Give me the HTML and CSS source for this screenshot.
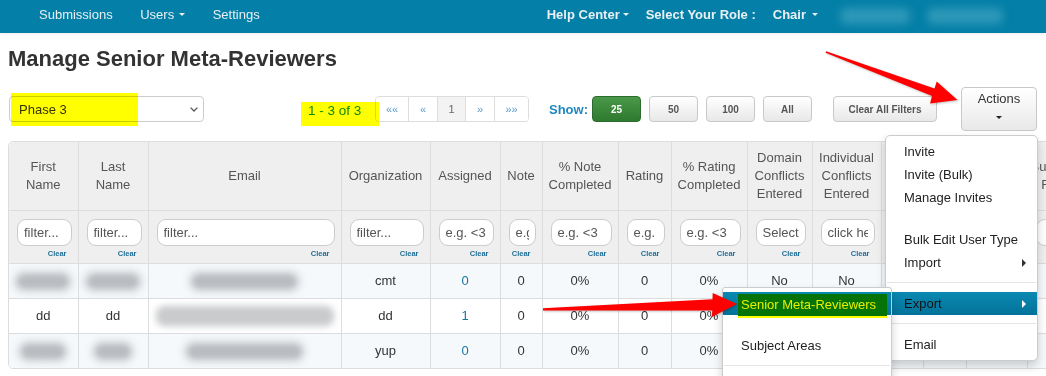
FILE: index.html
```html
<!DOCTYPE html>
<html lang="en">
<head>
    <meta charset="UTF-8">
    <meta name="viewport" content="width=device-width, initial-scale=1.0">
    <title>Manage Senior Meta-Reviewers</title>
    <link rel="stylesheet" href="styles.css">
</head>
<body>
    <div class="topbar">
        <div class="nav-left">
            <a>Submissions</a>
            <a>Users<span class="caret"></span></a>
            <a>Settings</a>
        </div>
        <div class="nav-right">
            <a class="strong">Help Center<span class="caret tight"></span></a>
            <span class="strong role">Select Your Role :</span>
            <a class="strong role">Chair<span class="caret wide"></span></a>
            <span class="nav-blur"></span>
            <span class="nav-blur second"></span>
        </div>
    </div>

    <div class="page">
        <h1 class="title">Manage Senior Meta-Reviewers</h1>

        <div class="toolbar">
            <div class="phase">
                <div class="select">
                    <span>Phase 3</span>
                    <svg width="8" height="5" viewBox="0 0 8 5"><path d="M0.6 0.6 L4 4 L7.4 0.6" fill="none" stroke="#555" stroke-width="1.3"/></svg>
                </div>
                <span class="marker phase-mark"></span>
            </div>

            <div class="count">
                1 - 3 of 3
                <span class="marker count-mark"></span>
            </div>

            <div class="pager">
                <span>&laquo;&laquo;</span>
                <span>&laquo;</span>
                <span class="on">1</span>
                <span>&raquo;</span>
                <span>&raquo;&raquo;</span>
            </div>

            <span class="show">Show:</span>
            <button class="btn green">25</button>
            <button class="btn">50</button>
            <button class="btn">100</button>
            <button class="btn">All</button>

            <button class="btn clear-all">Clear All Filters</button>

            <div class="actions">
                <button class="actions-btn">Actions<span class="caret dark"></span></button>
                <ul class="menu">
                    <li>Invite</li>
                    <li>Invite (Bulk)</li>
                    <li>Manage Invites</li>
                    <li class="gap"></li>
                    <li>Bulk Edit User Type</li>
                    <li class="sub">Import<span class="arrow"></span></li>
                    <li class="divider"></li>
                    <li class="sub active">Export<span class="arrow white"></span></li>
                    <li class="divider"></li>
                    <li>Email</li>

                    <ul class="submenu">
                        <li class="active"><span class="picked">Senior Meta-Reviewers</span></li>
                        <li class="gap"></li>
                        <li>Subject Areas</li>
                        <li class="divider"></li>
                        <li class="gap"></li>
                    </ul>
                </ul>
            </div>
        </div>

        <div class="grid-wrap">
            <table class="grid">
                <colgroup>
                    <col class="w69"><col class="w70"><col class="w193"><col class="w89"><col class="w70">
                    <col class="w42"><col class="w76"><col class="w53"><col class="w76"><col class="w65">
                    <col class="w69"><col class="w42"><col class="w43"><col class="w61"><col class="w64">
                </colgroup>
                <thead>
                    <tr class="head">
                        <th>First<br>Name</th>
                        <th>Last<br>Name</th>
                        <th>Email</th>
                        <th>Organization</th>
                        <th>Assigned</th>
                        <th>Note</th>
                        <th>% Note<br>Completed</th>
                        <th>Rating</th>
                        <th>% Rating<br>Completed</th>
                        <th>Domain<br>Conflicts<br>Entered</th>
                        <th>Individual<br>Conflicts<br>Entered</th>
                        <th></th>
                        <th></th>
                        <th></th>
                        <th>Submitted<br>Forms</th>
                    </tr>
                    <tr class="filters">
                        <td><input placeholder="filter..."><div class="clear">Clear</div></td>
                        <td><input placeholder="filter..."><div class="clear">Clear</div></td>
                        <td><input placeholder="filter..."><div class="clear">Clear</div></td>
                        <td><input placeholder="filter..."><div class="clear">Clear</div></td>
                        <td><input placeholder="e.g. <3"><div class="clear">Clear</div></td>
                        <td><input placeholder="e.g. <3"><div class="clear">Clear</div></td>
                        <td><input placeholder="e.g. <3"><div class="clear">Clear</div></td>
                        <td><input placeholder="e.g. <3"><div class="clear">Clear</div></td>
                        <td><input placeholder="e.g. <3"><div class="clear">Clear</div></td>
                        <td><input placeholder="Selected"><div class="clear">Clear</div></td>
                        <td><input placeholder="click here"><div class="clear">Clear</div></td>
                        <td></td>
                        <td></td>
                        <td></td>
                        <td><input></td>
                    </tr>
                </thead>
                <tbody>
                    <tr class="alt">
                        <td><span class="smudge s52"></span></td>
                        <td><span class="smudge s52"></span></td>
                        <td><span class="smudge s105"></span></td>
                        <td>cmt</td>
                        <td><a class="num">0</a></td>
                        <td>0</td>
                        <td>0%</td>
                        <td>0</td>
                        <td>0%</td>
                        <td>No</td>
                        <td>No</td>
                        <td></td><td></td><td></td><td></td>
                    </tr>
                    <tr>
                        <td>dd</td>
                        <td>dd</td>
                        <td><span class="smudge s180 light"></span></td>
                        <td>dd</td>
                        <td><a class="num">1</a></td>
                        <td>0</td>
                        <td>0%</td>
                        <td>0</td>
                        <td>0%</td>
                        <td></td>
                        <td></td>
                        <td></td><td></td><td></td><td></td>
                    </tr>
                    <tr class="alt">
                        <td><span class="smudge s44"></span></td>
                        <td><span class="smudge s36"></span></td>
                        <td><span class="smudge s115"></span></td>
                        <td>yup</td>
                        <td><a class="num">0</a></td>
                        <td>0</td>
                        <td>0%</td>
                        <td>0</td>
                        <td>0%</td>
                        <td></td>
                        <td></td>
                        <td></td><td></td><td></td><td></td>
                    </tr>
                </tbody>
            </table>
        </div>
    </div>

    <!-- annotation arrows drawn over the screenshot -->
    <svg class="arrows" width="1046" height="376" viewBox="0 0 1046 376">
        <polygon points="826,51.2 934.5,88.6 936.7,81.5 957.5,100 930,103.5 932,96 825.6,52.8"/>
        <polygon points="543,308.2 712.5,299.2 712.7,293 737,304 711.7,317 712.3,310.5 543,310.4"/>
    </svg>
</body>
</html>
```

FILE: styles.css
```css
* {
    box-sizing: border-box;
}
body {
    margin: 0;
    font-family: "Liberation Sans", Arial, sans-serif;
    font-size: 13px;
    color: #333;
    background: #fff;
    overflow: hidden;
    position: relative;
    height: 376px;
}

/* top navigation */
.topbar {
    display: flex;
    align-items: center;
    height: 33px;
    padding: 0 43px 4px 39px;
    background: #047fa7;
    color: #e8f0f4;
    box-shadow: 0 1px 3px rgba(0, 0, 0, 0.08);
}
.topbar a {
    color: inherit;
    text-decoration: none;
}
.nav-left {
    display: flex;
    gap: 27.5px;
}
.nav-right {
    display: flex;
    align-items: center;
    margin-left: auto;
}
.strong {
    font-weight: bold;
}
.role {
    margin-left: 17px;
}
.caret {
    display: inline-block;
    vertical-align: middle;
    width: 0;
    height: 0;
    margin-left: 5px;
    margin-top: -2px;
    border-top: 3px solid #e8f0f4;
    border-left: 3px solid transparent;
    border-right: 3px solid transparent;
}
.caret.tight {
    margin-left: 3px;
}
.caret.wide {
    margin-left: 6px;
}
.caret.dark {
    display: block;
    margin: 10px auto 0;
    border-top-color: #222;
}
.nav-blur {
    width: 70px;
    height: 16px;
    margin-left: 22px;
    margin-top: 2px;
    border-radius: 6px;
    background: #2e98b8;
    filter: blur(4px);
}
.nav-blur.second {
    width: 76px;
    margin-left: 17px;
}

/* page */
.page {
    padding: 0 8px;
}
.title {
    margin: 13px 0 0;
    font-size: 22px;
    line-height: 26px;
    font-weight: bold;
    color: #333;
}

.toolbar {
    display: flex;
    align-items: center;
    height: 44px;
    margin-top: 15px;
}
.phase {
    position: relative;
    margin-left: 1px;
}
.select {
    display: flex;
    align-items: center;
    justify-content: space-between;
    width: 195px;
    height: 26px;
    padding: 0 5px 0 9px;
    border: 1px solid #ccc;
    border-radius: 4px;
    background: #fff;
    color: #333;
}
.marker {
    position: absolute;
    background: #ffff00;
    mix-blend-mode: multiply;
}
.phase-mark {
    left: 2px;
    top: -3px;
    width: 127px;
    height: 33px;
}
.count {
    position: relative;
    top: 1px;
    width: 171px;
    padding-left: 104px;
    font-size: 13.5px;
    color: #0f8a0f;
}
.count-mark {
    left: 97px;
    top: -1px;
    width: 78px;
    height: 24px;
}
.pager {
    display: flex;
    height: 26px;
    border: 1px solid #ddd;
    border-radius: 4px;
    overflow: hidden;
}
.pager span {
    display: flex;
    align-items: center;
    justify-content: center;
    width: 29px;
    font-size: 11px;
    color: #5b98c8;
    border-left: 1px solid #ddd;
    background: #fff;
}
.pager span:first-child {
    width: 32px;
    border-left: 0;
}
.pager span:last-child {
    width: 34px;
}
.pager span.on {
    width: 28px;
    background: #f3f3f3;
    color: #666;
}
.show {
    margin: 0 4px 0 20px;
    font-weight: bold;
    color: #2088be;
}
.btn {
    width: 49px;
    height: 26px;
    margin-right: 8px;
    padding: 0;
    font-family: inherit;
    font-size: 10px;
    font-weight: bold;
    color: #555;
    background: linear-gradient(#fff, #e8e8e8);
    border: 1px solid #c8c8c8;
    border-radius: 4px;
}
.btn.green {
    color: #fff;
    background: linear-gradient(#4a984a, #2e7a2e);
    border-color: #2b6b2b;
}
.btn.clear-all {
    width: 104px;
    margin: 0 0 0 13px;
}
.actions {
    position: relative;
    margin-left: 24px;
}
.actions-btn {
    display: block;
    width: 76px;
    height: 44px;
    padding: 0 0 7px;
    font-family: inherit;
    font-size: 13px;
    line-height: 14px;
    color: #333;
    background: linear-gradient(#fff, #e9e9e9);
    border: 1px solid #c8c8c8;
    border-radius: 4px;
    text-align: center;
}

/* dropdown */
.menu,
.submenu {
    list-style: none;
    margin: 0;
    background: #fff;
    border: 1px solid #ccc;
    box-shadow: 0 5px 10px rgba(0, 0, 0, 0.18);
}
.menu {
    position: absolute;
    right: -1px;
    top: 48px;
    width: 153px;
    padding: 4px 0 4px;
    border-radius: 5px;
    z-index: 10;
}
.menu li {
    position: relative;
    height: 23px;
    line-height: 23px;
    padding-left: 18px;
    color: #222;
    white-space: nowrap;
}
.menu li.gap {
    height: 19px;
}
.menu li.divider {
    height: 1px;
    margin: 8px 1px 9px;
    padding: 0;
    background: #e5e5e5;
}
.menu li.active {
    background: linear-gradient(#0a89b1, #04729a);
    color: #111;
}
.arrow {
    position: absolute;
    right: 11px;
    top: 8px;
    border-left: 4px solid #333;
    border-top: 4px solid transparent;
    border-bottom: 4px solid transparent;
}
.arrow.white {
    border-left-color: #fff;
}
.submenu {
    position: absolute;
    left: -164px;
    top: 151px;
    width: 170px;
    padding: 4px 0 0;
    border-radius: 3px;
    z-index: 11;
}
.submenu li.active {
    display: flex;
    align-items: flex-start;
    padding: 2px 0 0 15px;
}
.picked {
    display: block;
    height: 24px;
    line-height: 21px;
    padding: 0 11px 0 3px;
    background: #067306;
    color: #e4f000;
    border-bottom: 2px solid #ffff00;
}
.submenu li.divider {
    margin: 8px 1px 0;
}

/* table */
.grid-wrap {
    width: max-content;
    margin-top: 10px;
    border: 1px solid #ddd;
    border-radius: 5px;
    overflow: hidden;
}
.grid {
    border-collapse: collapse;
    border-style: hidden;
    table-layout: fixed;
}
.w69 { width: 69px; }
.w70 { width: 70px; }
.w193 { width: 193px; }
.w89 { width: 89px; }
.w42 { width: 42px; }
.w43 { width: 43px; }
.w76 { width: 76px; }
.w53 { width: 53px; }
.w65 { width: 65px; }
.w61 { width: 61px; }
.w64 { width: 64px; }

.grid th,
.grid td {
    border: 1px solid #ddd;
    text-align: center;
    overflow: hidden;
}
.head th {
    height: 68px;
    padding: 0 3px;
    font-weight: normal;
    line-height: 18px;
    color: #555;
    background: #efefef;
}
.filters td {
    height: 53px;
    padding: 8px 6px 0 8px;
    vertical-align: top;
    background: #efefef;
}
.filters input {
    display: block;
    width: 100%;
    height: 27px;
    padding: 0 6px;
    font-family: inherit;
    font-size: 13px;
    border: 1px solid #ccc;
    border-radius: 9px;
    background: #fff;
}
.filters input::placeholder {
    color: #555;
}
.clear {
    margin-top: 3px;
    padding-right: 5px;
    text-align: right;
    font-size: 7.5px;
    font-weight: bold;
    line-height: 9px;
    color: #1d6e98;
}
.grid tbody td {
    height: 35px;
    color: #333;
}
.grid tbody tr.alt td {
    background: #f5f9fc;
}
.num {
    color: #1a76a0;
    text-decoration: none;
}
.smudge {
    display: inline-block;
    vertical-align: middle;
    height: 15px;
    border-radius: 8px;
    background: #b8bbbf;
    box-shadow: 0 0 0 5px #e4e6e8;
    filter: blur(3px);
}
.smudge.light {
    height: 18px;
    background: #c9cbcd;
    box-shadow: 0 0 0 2px #dcdee0;
}
.s36 { width: 36px; }
.s44 { width: 44px; }
.s52 { width: 52px; }
.s105 { width: 105px; }
.s115 { width: 115px; }
.s180 { width: 176px; }

/* annotation arrows */
.arrows {
    position: absolute;
    left: 0;
    top: 0;
    z-index: 20;
    pointer-events: none;
}
.arrows polygon {
    fill: #ff0000;
    filter: drop-shadow(1px 1px 1px rgba(0, 0, 0, 0.25));
}
```
